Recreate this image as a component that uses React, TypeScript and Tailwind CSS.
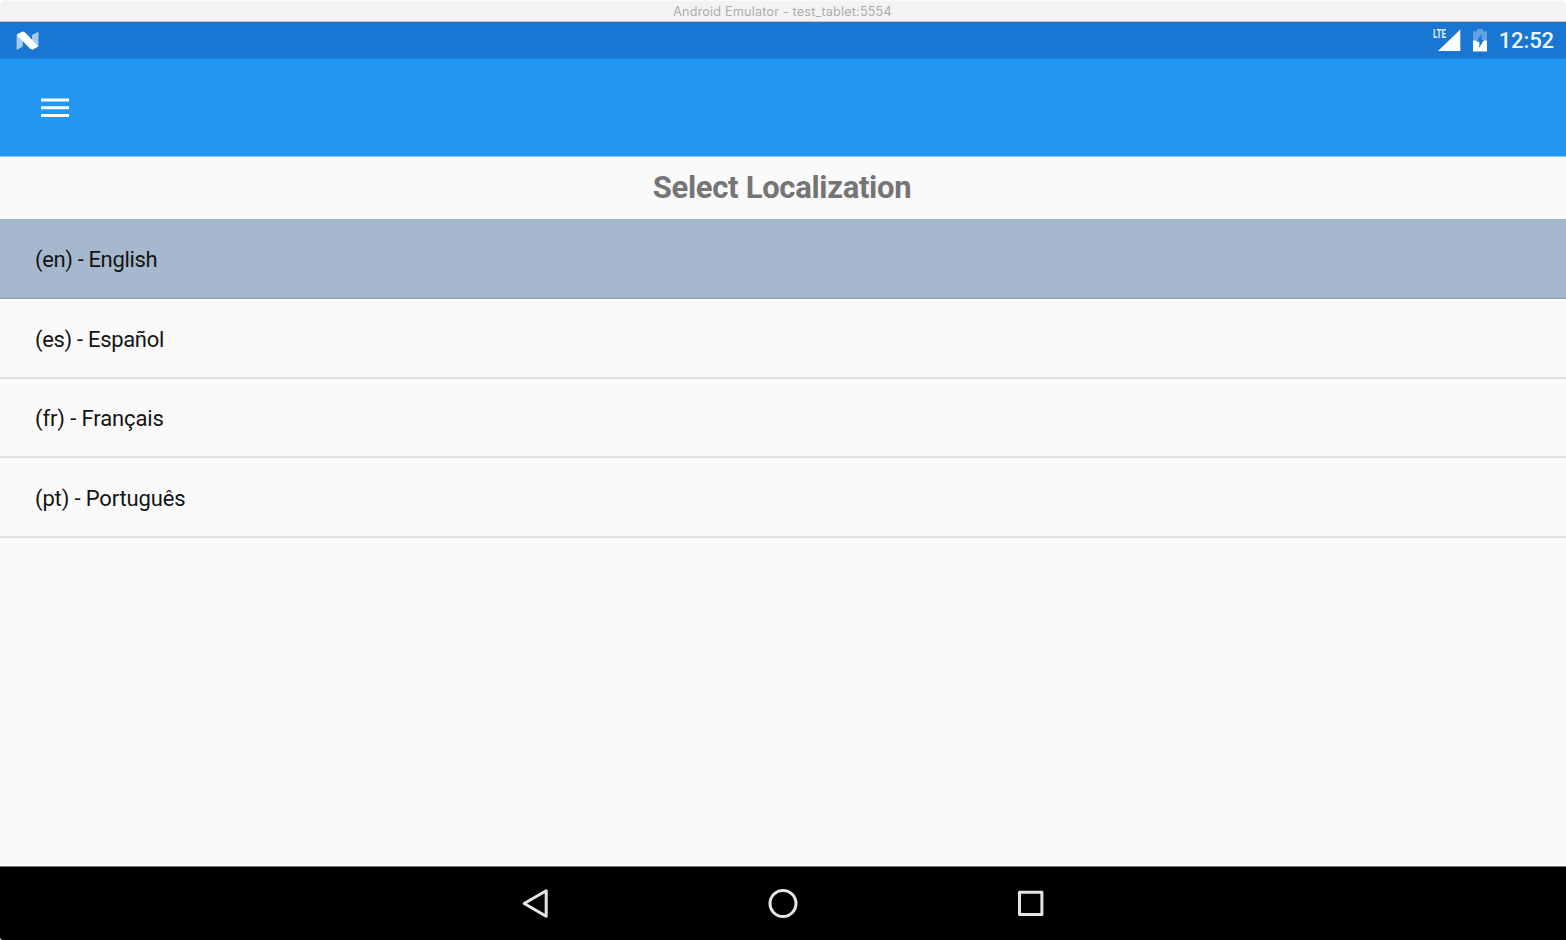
const languages = [
  { code: "en", name: "English", row: "h-[80px] bg-[#a6b8ce] border-[#9aaabe] tracking-[-0.360px]" },
  { code: "es", name: "Español", row: "h-[80px] border-[#e0e0e0] tracking-[-0.320px]" },
  { code: "fr", name: "Français", row: "h-[79px] border-[#e0e0e0] tracking-[-0.110px]" },
  { code: "pt", name: "Português", row: "h-[80px] border-[#e0e0e0] tracking-[-0.150px]" },
];

function NougatIcon() {
  return (
    <svg width="24" height="20" viewBox="0 0 24 20" fill="#fff">
      <path d="M.600 3.700 6.800.700v14.800L.600 19z" opacity=".62" />
      <path d="M16 4 22.400.800v14.800L16 19z" opacity=".62" />
      <path d="M1.200 3.200 6.600.400Q8 .300 9.600 1.900L22.300 15.300 16.800 18.500Q15.200 18.700 13.900 17.400L1.200 4.600z" />
    </svg>
  );
}

function SignalIcon() {
  return (
    <div className="relative h-[24px] w-[28px]">
      <svg width="28" height="24" viewBox="0 0 28 24" fill="#fff">
        <path d="M27.300.500V22H5z" />
      </svg>
      <span className="absolute left-0 top-0 origin-left scale-x-[0.620] text-[13px] font-bold leading-[10px] text-[#e4eefa]">
        LTE
      </span>
    </div>
  );
}

function BatteryIcon() {
  return (
    <svg width="14" height="23" viewBox="0 0 14 23">
      <path d="M0 2.200h4V0h6v2.200h4v9.300H0z" fill="#fff" opacity=".32" />
      <path d="M0 11.500h14v11H0z" fill="#fff" />
      <path d="M8.400 5 3.600 12.700h2.700v6L10.800 11H8.400z" fill="#1976d2" />
    </svg>
  );
}

export default function App() {
  return (
    <div className="h-[940px] w-full bg-white">
      <div className="flex h-full flex-col overflow-hidden rounded-t-[6px] rounded-bl-[3px] bg-[#fafafa] font-['Roboto',sans-serif]">
        <div className="flex h-[22px] shrink-0 items-center justify-center border-b border-[#c9c6c3] bg-[#f3f3f3] pr-px pt-[3px] font-['Inter',sans-serif] text-[12.600px] leading-[18px] tracking-[0.200px] text-[#acacac] shadow-[inset_0_1px_0_#fafafa]">
          <span>Android Emulator - test_tablet:5554</span>
        </div>

        <header className="shrink-0">
          <div className="flex h-[37px] items-center justify-between border-b border-[#1c82df] bg-[#1976d2] pl-[16px] pr-[12px] pt-[2px]">
            <NougatIcon />
            <div className="flex items-center text-[#f0f6fd]">
              <SignalIcon />
              <div className="ml-[12px] mr-[12px] pb-[2px]">
                <BatteryIcon />
              </div>
              <span className="text-[22px] font-medium leading-[24px] tracking-[-0.100px]">12:52</span>
            </div>
          </div>
          <div className="flex h-[98px] items-center border-b border-[#8bc7f8] bg-[#2196f3] pl-[41px]">
            <button type="button" aria-label="Menu">
              <svg width="28" height="20" viewBox="0 0 28 20" fill="#fff">
                <path d="M0 .500h28v3H0zM0 8.300h28v3H0zM0 16.100h28v3H0z" />
              </svg>
            </button>
          </div>
        </header>

        <main className="flex-1">
          <h1 className="flex h-[62px] items-center justify-center pr-[2px] text-[31px] font-bold leading-[40px] tracking-[-0.320px] text-[#757575]">
            Select Localization
          </h1>
          <ul>
            {languages.map((language) => (
              <li
                key={language.code}
                className={`flex items-center border-b-2 pl-[35px] pt-[2px] text-[22px] text-[#141414] ${language.row}`}
              >
                <span>{`(${language.code}) - ${language.name}`}</span>
              </li>
            ))}
          </ul>
        </main>

        <nav className="flex h-[74px] shrink-0 items-center justify-center gap-[216px] border-t border-[#777777] bg-black">
          <svg width="32" height="32" viewBox="0 0 32 32" fill="none" stroke="#e6e6e6" strokeWidth="3" strokeLinejoin="round">
            <path d="M27.200 2.700 5.200 15.500l22 12.800z" />
          </svg>
          <svg width="32" height="32" viewBox="0 0 32 32" fill="none" stroke="#e6e6e6" strokeWidth="3">
            <circle cx="16" cy="15.500" r="13" />
          </svg>
          <svg width="32" height="32" viewBox="0 0 32 32" fill="none" stroke="#e6e6e6" strokeWidth="3" strokeLinejoin="round">
            <path d="M4.500 4.200h22.400v22.400H4.500z" />
          </svg>
        </nav>
      </div>
    </div>
  );
}
